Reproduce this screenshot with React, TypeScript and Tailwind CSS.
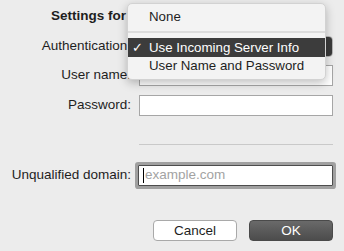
export default function App() {
  return (
    <div className="relative w-[344px] h-[251px] overflow-hidden bg-[#ececec] text-[13.5px] text-[#1e1e1e] font-['Liberation_Sans',Arial,sans-serif]">
      <div className="grid grid-cols-[131px_194px] gap-x-[8px]">
        {/* title */}
        <div className="col-span-2 h-[32px] pl-[51px] flex items-center font-bold">
          Settings for
        </div>

        {/* authentication */}
        <div className="mt-[4px] h-[21px] flex items-center justify-end">Authentication:</div>
        <div className="mt-[4px] h-[21px] flex items-stretch justify-end rounded-[4px] bg-white border border-[#b5b5b5] overflow-hidden">
          <div className="w-[16px] bg-[#3a3a3a] flex flex-col items-center justify-center text-white text-[7px] leading-[6px]">
            <span>⌃</span>
            <span className="rotate-180">⌃</span>
          </div>
        </div>

        {/* user name */}
        <div className="mt-[8px] h-[21px] flex items-center justify-end">User name:</div>
        <div className="mt-[8px] h-[21px] bg-white border border-[#a6a6a6]" />

        {/* password */}
        <div className="mt-[9px] h-[21px] flex items-center justify-end">Password:</div>
        <div className="mt-[9px] h-[21px] bg-white border border-[#a6a6a6]" />

        {/* separator */}
        <div />
        <div className="mt-[28px] h-px bg-[#c9c9c9]" />

        {/* domain */}
        <div className="mt-[20px] h-[21px] flex items-center justify-end">Unqualified domain:</div>
        <div className="mt-[20px] -ml-[1px] h-[21px] flex items-center bg-white border border-[#4d4d4d] rounded-[1px] shadow-[0_0_0_3px_#a0a0a0] pl-[4px]">
          <span className="w-px h-[15px] bg-black mr-[1px]" />
          <span className="text-[#a3a3a3]">example.com</span>
        </div>
      </div>

      {/* buttons */}
      <div className="mt-[34px] pr-[11px] flex justify-end gap-[12px]">
        <button className="w-[84px] h-[21px] rounded-[4px] bg-white border border-[#a9a9a9] text-[13.5px] text-[#1e1e1e]">
          Cancel
        </button>
        <button className="w-[84px] h-[21px] rounded-[4px] bg-gradient-to-b from-[#6a6a6a] to-[#4c4c4c] border border-[#4a4a4a] text-[13.5px] text-white">
          OK
        </button>
      </div>

      {/* open popup menu */}
      <div className="absolute left-[127px] top-[3px] w-[199px] rounded-[5px] bg-[#f3f3f3] border border-[#d2d2d2] shadow-[0_3px_10px_rgba(0,0,0,0.25)] pt-[3px] pb-[5px] text-[13.3px]">
        <div className="h-[19px] pl-[21px] flex items-center">None</div>
        <div className="h-[12px] flex items-center">
          <div className="w-full h-[2px] bg-[#dcdcdc]" />
        </div>
        <div className="h-[19px] flex items-center bg-[#3c3c3c] text-white">
          <span className="w-[21px] pl-[4px] text-[13px]">✓</span>
          <span>Use Incoming Server Info</span>
        </div>
        <div className="h-[17px] pl-[21px] flex items-center">User Name and Password</div>
      </div>
    </div>
  );
}
